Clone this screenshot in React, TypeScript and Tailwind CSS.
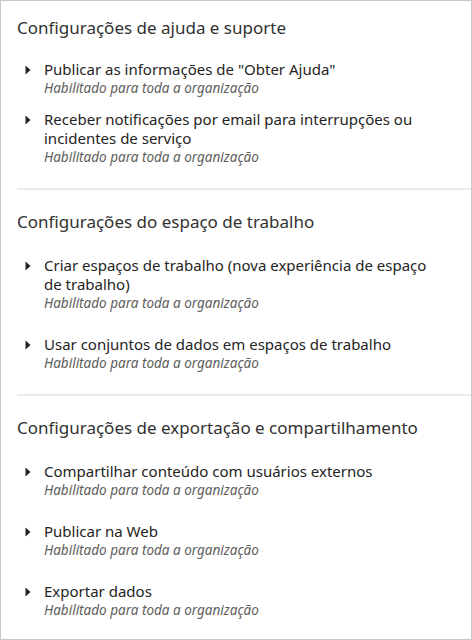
import React from 'react';

type Item = { label: string };

const sections: { title: string; gap: string; top: string; list: string; items: Item[] }[] = [
  {
    title: 'Configurações de ajuda e suporte',
    gap: 'gap-[12px]',
    top: 'pt-[15px]',
    list: 'mt-[20px]',
    items: [
      { label: 'Publicar as informações de "Obter Ajuda"' },
      { label: 'Receber notificações por email para interrupções ou incidentes de serviço' },
    ],
  },
  {
    title: 'Configurações do espaço de trabalho',
    gap: 'gap-[22px]',
    top: 'pt-[20px]',
    list: 'mt-[22px]',
    items: [
      { label: 'Criar espaços de trabalho (nova experiência de espaço de trabalho)' },
      { label: 'Usar conjuntos de dados em espaços de trabalho' },
    ],
  },
  {
    title: 'Configurações de exportação e compartilhamento',
    gap: 'gap-[22px]',
    top: 'pt-[20px]',
    list: 'mt-[22px]',
    items: [
      { label: 'Compartilhar conteúdo com usuários externos' },
      { label: 'Publicar na Web' },
      { label: 'Exportar dados' },
    ],
  },
];

const Caret = () => (
  <svg width="6" height="10" viewBox="0 0 6 10" className="mt-[5px] shrink-0">
    <path d="M0.5 0.5 L5.5 5 L0.5 9.5 Z" fill="#252423" />
  </svg>
);

const Setting = ({ label }: Item) => (
  <div className="flex items-start pl-[8px]">
    <Caret />
    <div className="ml-[13px] pr-[32px]">
      <div className="text-[15px] leading-[19px] text-[#252423]">{label}</div>
      <div className="text-[13.5px] leading-[19px] italic text-[#605e5c]">Habilitado para toda a organização</div>
    </div>
  </div>
);

export default function App() {
  return (
    <div
      className="w-[472px] h-[640px] bg-white border border-[#c8c8c8] pl-[16px] overflow-hidden"
      style={{ fontFamily: '"Noto Sans", "Open Sans", sans-serif' }}
    >
      {sections.map((s, i) => (
        <div key={s.title} className={i > 0 ? 'border-t-2 border-[#ebebeb]' : ''}>
          <div className={s.top}>
            <h2 className="text-[17px] leading-[24px] text-[#323130] font-normal">{s.title}</h2>
            <div className={`flex flex-col pb-[21px] ${s.list} ${s.gap}`}>
              {s.items.map((it) => (
                <Setting key={it.label} label={it.label} />
              ))}
            </div>
          </div>
        </div>
      ))}
    </div>
  );
}
